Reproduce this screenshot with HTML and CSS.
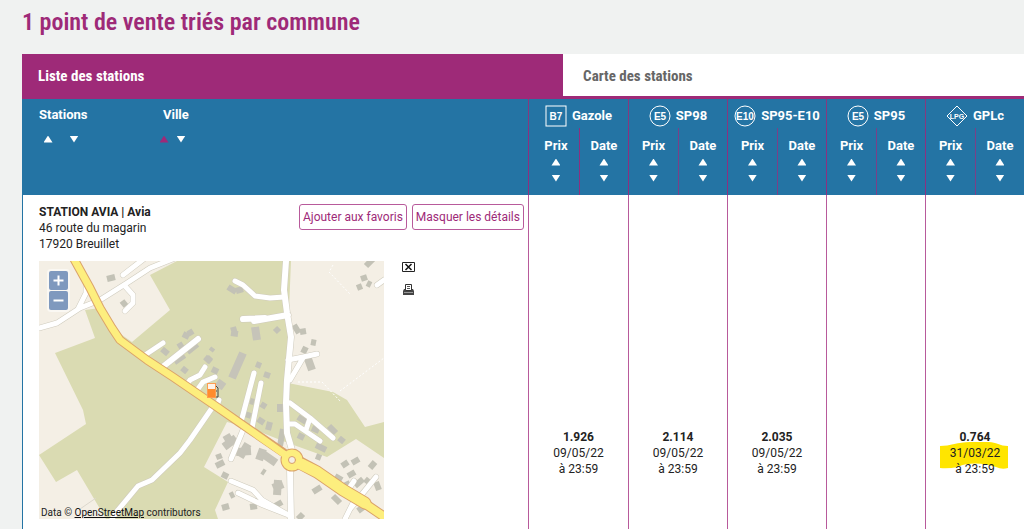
FILE: index.html
```
<!DOCTYPE html>
<html lang="fr">
<head>
<meta charset="utf-8">
<title>Liste des stations</title>
<link rel="stylesheet" href="styles.css">
</head>
<body>
<main class="page">
<h1 class="page-title">1 point de vente triés par commune</h1>
<nav class="tabs">
<a class="tab tab-active" href="#liste">Liste des stations</a>
<a class="tab" href="#carte">Carte des stations</a>
</nav>
<table class="stations" id="liste">
<colgroup>
<col class="col-main">
<col class="col-first"><col class="col-date">
<col class="col-price"><col class="col-date">
<col class="col-price"><col class="col-date">
<col class="col-price"><col class="col-date">
<col class="col-price"><col class="col-date">
</colgroup>
<thead>
<tr>
<th class="head-main" rowspan="2">
<div class="sorts">
<div class="sort-group sort-station">
<span>Stations</span>
<div class="arrows"><button class="arrow" aria-label="Stations, croissant"></button><button class="arrow down" aria-label="Stations, décroissant"></button></div>
</div>
<div class="sort-group sort-city">
<span>Ville</span>
<div class="arrows"><button class="arrow selected" aria-label="Ville, croissant"></button><button class="arrow down" aria-label="Ville, décroissant"></button></div>
</div>
</div>
</th>
<th class="fuel" colspan="2"><div class="fuel-name"><svg class="badge" viewBox="0 0 22 22"><rect x="1" y="1" width="20" height="20"/><text x="11" y="15">B7</text></svg>Gazole</div></th>
<th class="fuel" colspan="2"><div class="fuel-name"><svg class="badge" viewBox="0 0 22 22"><circle cx="11" cy="11" r="10"/><text x="11" y="15">E5</text></svg>SP98</div></th>
<th class="fuel" colspan="2"><div class="fuel-name"><svg class="badge" viewBox="0 0 22 22"><circle cx="11" cy="11" r="10"/><text x="11" y="15">E10</text></svg>SP95-E10</div></th>
<th class="fuel" colspan="2"><div class="fuel-name"><svg class="badge" viewBox="0 0 22 22"><circle cx="11" cy="11" r="10"/><text x="11" y="15">E5</text></svg>SP95</div></th>
<th class="fuel" colspan="2"><div class="fuel-name"><svg class="badge" viewBox="0 0 22 22"><path d="M11 1L21 11L11 21L1 11Z"/><text class="small" x="11" y="14">LPG</text></svg>GPLc</div></th>
</tr>
<tr>
<th class="sub first">Prix<button class="arrow" aria-label="Prix Gazole, croissant"></button><button class="arrow down" aria-label="Prix Gazole, décroissant"></button></th>
<th class="sub">Date<button class="arrow" aria-label="Date Gazole, croissant"></button><button class="arrow down" aria-label="Date Gazole, décroissant"></button></th>
<th class="sub">Prix<button class="arrow" aria-label="Prix SP98, croissant"></button><button class="arrow down" aria-label="Prix SP98, décroissant"></button></th>
<th class="sub date">Date<button class="arrow" aria-label="Date SP98, croissant"></button><button class="arrow down" aria-label="Date SP98, décroissant"></button></th>
<th class="sub">Prix<button class="arrow" aria-label="Prix SP95-E10, croissant"></button><button class="arrow down" aria-label="Prix SP95-E10, décroissant"></button></th>
<th class="sub date">Date<button class="arrow" aria-label="Date SP95-E10, croissant"></button><button class="arrow down" aria-label="Date SP95-E10, décroissant"></button></th>
<th class="sub">Prix<button class="arrow" aria-label="Prix SP95, croissant"></button><button class="arrow down" aria-label="Prix SP95, décroissant"></button></th>
<th class="sub date">Date<button class="arrow" aria-label="Date SP95, croissant"></button><button class="arrow down" aria-label="Date SP95, décroissant"></button></th>
<th class="sub">Prix<button class="arrow" aria-label="Prix GPLc, croissant"></button><button class="arrow down" aria-label="Prix GPLc, décroissant"></button></th>
<th class="sub date">Date<button class="arrow" aria-label="Date GPLc, croissant"></button><button class="arrow down" aria-label="Date GPLc, décroissant"></button></th>
</tr>
</thead>
<tbody>
<tr>
<td class="station">
<div class="station-head">
<div class="address"><strong>STATION AVIA | Avia</strong><br>46 route du magarin<br>17920 Breuillet</div>
<div class="actions"><button class="action">Ajouter aux favoris</button><button class="action">Masquer les détails</button></div>
</div>
<div class="details">
<div class="map">
<svg class="map-drawing" viewBox="39 261 345 258" preserveAspectRatio="xMidYMid slice">
<rect x="39" y="261" width="345" height="258" fill="#f4efe5"/>
<g fill="#dadbb2">
<path d="M177 261H291L289 310L292 345L288 383L333 392L347 400L365 427L384 422V458L356 439L327 457L288 443L250 428L227 422L204 467L228 482L215 510L218 519H106L77 470L56 482L39 455L86 424L83 410L55 353L95 338L85 310L100 308L112 328L132 342L170 310L150 275Z"/>
</g>
<g fill="none" stroke="#fff" stroke-width="1" stroke-dasharray="2 2"><path d="M333 265L329 272L350 294M298 382L322 382L341 402M340 391L384 358"/></g>
<path d="M80 509L96 498" fill="none" stroke="#ddd8cd"/>
<g fill="none" stroke="#c3c2b6" stroke-width="6">
<path d="M107 279L115 277M122 301L126 306M228 287L236 292M236 291L243 289M233 327L235 334M231 333L238 334M275 328L279 332M294 325L299 333M300 332L306 331M311 342L316 343M303 353L306 347M366 266L373 259M361 279L367 277M367 283L371 285M357 288L362 286M183 334L189 337M188 334L193 331M162 349L168 354M178 347L183 344M205 357L211 362M206 362L211 357M212 369L218 372M182 368L187 372M256 364L261 366M264 374L270 376M250 401L254 402M261 404L266 407M280 404L280 412M245 414L251 416M258 419L264 423M270 422L268 430M298 417L306 422M298 435L304 438M312 428L319 431M329 426L336 433M339 438L344 442M316 445L326 450M316 456L321 458M283 429L280 446M342 466L348 462M352 463L359 459M370 468L375 462M335 476L342 480M348 476L355 472M344 486L350 483M355 486L363 479M365 479L371 484M376 482L379 490M313 492L321 487M333 496L340 503M358 511L366 505M374 513L379 508M216 466L224 462M220 459L218 454M262 471L265 473M222 474L228 477M230 496L234 494M222 508L229 506M250 507L257 506M275 506L282 502M298 519L303 514"/>
<path stroke-width="4" d="M175 363L185 356M188 353L198 345M210 348L214 351"/>
</g>
<g fill="none" stroke="#c6c4b9" stroke-width="8">
<path d="M232 378L243 353M224 447L236 438M229 440L226 435M236 452L251 451M240 457L248 444M259 460L263 449M263 454L276 463M278 480L277 495M273 488L283 484M255 327L257 340M217 382L224 387M307 356L312 370"/>
</g>
<g class="roads casing">
<path d="M39 328L57 323L80 308L100 300L127 283L150 268L175 258M78 309L86 293V284M123 275L145 258M124 285L133 295V303L125 311M235 281L243 285L255 296L270 298L284 297M163 343L145 355M205 367L200 375L190 380L185 387M215 377L203 382L195 393M212 408L190 440L180 453L152 480L138 486L118 510L112 519M254 373L241 422M261 383L252 428M243 430L231 459M288 360L303 357L317 354M303 358L290 380M290 403L310 418L333 438M287 424H295L320 441M310 418L306 430M231 481L253 490L262 500L290 516M238 493L263 505L291 516M376 477L350 509M354 481L350 487M355 499L345 519M384 280L377 285M217 406L219 400"/>
<path class="wide" d="M254 321L288 315M243 319L265 318M198 339L160 369M286 261L284 290L287 313L291 337L287 380L286 403L287 433L292 450M290 468L291 519"/>
</g>
<g class="roads">
<path d="M39 328L57 323L80 308L100 300L127 283L150 268L175 258M78 309L86 293V284M123 275L145 258M124 285L133 295V303L125 311M235 281L243 285L255 296L270 298L284 297M163 343L145 355M205 367L200 375L190 380L185 387M215 377L203 382L195 393M212 408L190 440L180 453L152 480L138 486L118 510L112 519M254 373L241 422M261 383L252 428M243 430L231 459M288 360L303 357L317 354M303 358L290 380M290 403L310 418L333 438M287 424H295L320 441M310 418L306 430M231 481L253 490L262 500L290 516M238 493L263 505L291 516M376 477L350 509M354 481L350 487M355 499L345 519M384 280L377 285M217 406L219 400"/>
<path class="wide" d="M254 321L288 315M243 319L265 318M198 339L160 369M286 261L284 290L287 313L291 337L287 380L286 403L287 433L292 450M290 468L291 519"/>
</g>
<g fill="none" stroke-linejoin="round" stroke-linecap="round">
<g stroke="#dba36a"><path stroke-width="9" d="M74 259L90 288L100 308L112 328L120 340L147 360L173 377L217 407L240 423L284 453"/><path stroke-width="13" d="M300 463L317 472L343 490L365 503"/><path stroke-width="10" d="M364 503L386 518"/><circle cx="292" cy="460" r="7" stroke-width="9"/></g>
<g stroke="#fdee7e"><path stroke-width="7" d="M74 259L90 288L100 308L112 328L120 340L147 360L173 377L217 407L240 423L284 454"/><path stroke-width="11" d="M301 464L317 472L343 490L365 503"/><path stroke-width="8" d="M364 503L386 518"/><circle cx="292" cy="460" r="7" stroke-width="7"/></g>
<circle cx="292" cy="460" r="3.500" fill="#f4efe5" stroke="#dba36a"/>
</g>
<g><path d="M216 386l2 2v9h-3v-6h2" fill="none" stroke="#444"/><rect x="207.500" y="383.500" width="8" height="14" fill="#ff8c2e" stroke="#ff9c50"/><rect x="208" y="384" width="7" height="5" fill="#fff3e8"/></g>
</svg>
<div class="zoom"><button aria-label="Zoom avant"><svg viewBox="0 0 19 19"><path d="M4.500 9.500h10M9.500 4.500v10"/></svg></button><button aria-label="Zoom arrière"><svg viewBox="0 0 19 19"><path d="M4.500 9.500h10"/></svg></button></div>
<div class="credit">Data © <a href="#osm">OpenStreetMap</a> contributors</div>
</div>
<div class="tools">
<button class="tool" aria-label="Fermer"><svg viewBox="0 0 13 12"><path d="M.5 1.500h12v9H.5z" fill="#fff" stroke="#222"/><path d="M3.500 3l6 6M9.500 3l-6 6" stroke="#111" stroke-width="1.500"/></svg></button>
<button class="tool" aria-label="Imprimer"><svg viewBox="0 0 13 12"><path d="M2 5h9l1 2v4H1V7z" fill="#444"/><path d="M3.500.5h6v6h-6z" fill="#fff" stroke="#333"/><path d="M5 2.500h3M5 4.500h3" stroke="#555"/><path d="M2 8.500h9" stroke="#999"/></svg></button>
</div>
</div>
</td>
<td class="price" colspan="2"><strong>1.926</strong><br>09/05/22<br>à 23:59</td>
<td class="price" colspan="2"><strong>2.114</strong><br>09/05/22<br>à 23:59</td>
<td class="price" colspan="2"><strong>2.035</strong><br>09/05/22<br>à 23:59</td>
<td class="price" colspan="2"></td>
<td class="price" colspan="2"><div class="marked"><svg class="marker" viewBox="0 0 68 28"><path d="M0 4C10 4 18 0 30 0H49C56 0 60 4 68 4V26Q62 28 56 25C44 21 28 20 18 25Q8 27 0 26Z" fill="#ffe500"/></svg><strong>0.764</strong><br>31/03/22<br>à 23:59</div></td>
</tr>
</tbody>
</table>
</main>
</body>
</html>
```
FILE: styles.css
```
* { box-sizing: border-box; }
body { margin: 0; background: #f0f2f1; color: #222; font: 12px/16px Roboto, "Liberation Sans", sans-serif; }
button { font: inherit; border: 0; padding: 0; background: none; cursor: pointer; }
svg { display: block; }
.page { padding: 8px 0 0 22px; }
.page-title { margin: 0 0 18px; color: #9e2a78; font: 600 24px/28px "Roboto Condensed", Roboto, sans-serif; }
.tabs { display: flex; background: #fff; border-bottom: 3px solid #9e2a78; }
.tab { width: 54%; padding: 12px 16px 9px; color: #666; font: 700 15px/21px "Roboto Condensed", Roboto, sans-serif; text-decoration: none; }
.tab + .tab { width: auto; padding-left: 20px; }
.tab-active { background: #9e2a78; color: #fff; }
.stations { width: 100%; table-layout: fixed; border-collapse: separate; border-spacing: 0; border-left: 1px solid #2474a4; background: #fff; }
.col-first { width: 51px; }
.col-price { width: 50px; }
.col-date { width: 49px; }
th, td { padding: 0; vertical-align: top; }
th { background: #2474a4; color: #fff; font-size: 13px; font-weight: 700; }
.head-main { padding: 8px 16px; text-align: left; }
.sorts { display: flex; }
.sort-group { display: flex; flex-direction: column; gap: 8px; }
.sort-station { width: 124px; }
.arrows { display: flex; gap: 12px; padding-left: 2px; }
.sort-city .arrows { gap: 3px; padding: 0; margin-left: -6px; }
.arrow { display: block; width: 14px; height: 16px; }
.arrow::before { content: ""; display: block; margin: 0 auto; width: 9px; height: 7px; background: #fff; clip-path: polygon(50% 0, 100% 100%, 0 100%); }
.arrow.down::before { clip-path: polygon(0 0, 100% 0, 50% 100%); }
.arrow.selected::before { background: #9e2a78; }
.fuel { height: 29px; padding-top: 6px; border-left: 1px solid #86397f; }
.fuel-name { display: flex; align-items: center; justify-content: center; gap: 5px; height: 22px; white-space: nowrap; }
.badge { width: 22px; height: 22px; fill: none; stroke: #fff; stroke-width: 1px; }
.badge text { fill: #fff; stroke: none; font: 700 10px "Liberation Sans", sans-serif; text-anchor: middle; }
.badge .small { font-size: 7px; }
.sub { height: 67px; padding-top: 10px; border-left: 1px solid #8d3080; }
.sub.first { padding-left: 4px; }
.sub.date { border-color: #7a4088; }
.sub .arrow { margin: 0 auto; }
.station { padding: 9px 4px 10px 16px; }
.station-head { display: flex; justify-content: space-between; align-items: flex-start; }
.actions { display: flex; gap: 5px; }
.action { height: 26px; padding: 0 3px; border: 1px solid #b85a9b; border-radius: 3px; color: #9e2a78; white-space: nowrap; }
.details { display: flex; gap: 18px; margin-top: 9px; }
.map { position: relative; width: 345px; }
.map-drawing { width: 100%; aspect-ratio: 345 / 258; }
.roads { fill: none; stroke: #fff; stroke-width: 5px; stroke-linecap: round; stroke-linejoin: round; }
.roads .wide { stroke-width: 6px; }
.casing { stroke: #cfcbbd; stroke-width: 6px; }
.casing .wide { stroke-width: 7px; }
.zoom { position: absolute; top: 8px; left: 8px; display: grid; gap: 1px; padding: 2px; border-radius: 4px; background: #faf8f3; }
.zoom button { width: 19px; height: 19px; border-radius: 2px; background: #7f99be; }
.zoom svg { fill: none; stroke: #fff; stroke-width: 2px; }
.credit { position: absolute; bottom: 0; left: 2px; font-size: 10px; line-height: 12px; color: #222; white-space: nowrap; }
.credit a { color: #111; }
.tools { display: flex; flex-direction: column; gap: 11px; }
.tool svg { width: 13px; height: 12px; }
.price { padding-bottom: 52px; border-left: 1px solid #b85a9b; text-align: center; vertical-align: bottom; }
.marked { position: relative; isolation: isolate; }
.marker { position: absolute; z-index: -1; top: 13px; left: 50%; width: 68px; height: 28px; margin-left: -35px; }
```
